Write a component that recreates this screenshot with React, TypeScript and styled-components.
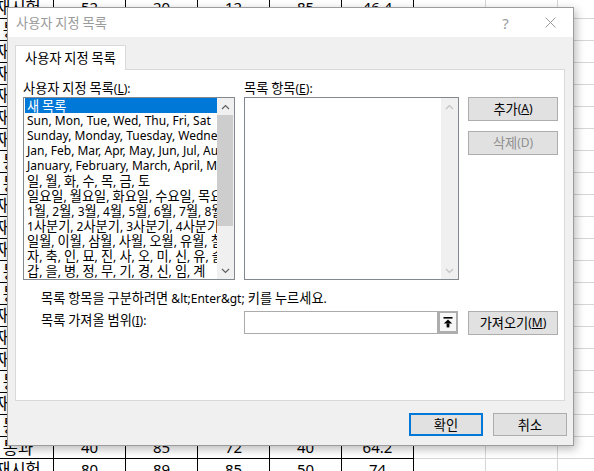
import React from "react";
import styled, { createGlobalStyle } from "styled-components";

const UI_FONT = `"Noto Sans", "Noto Sans CJK KR", sans-serif`;

const GlobalStyle = createGlobalStyle`
  html, body { margin: 0; padding: 0; background: #fff; }
  body { width: 594px; height: 471px; overflow: hidden; font-family: ${UI_FONT}; }
  #root { position: relative; width: 594px; height: 471px; overflow: hidden; }
`;

/* Hangul runs are set slightly larger so they get the width of the original UI font */
const Hangul = styled.span`
  font-family: "Noto Sans CJK KR", sans-serif;
  font-size: 1.1em;
`;

const HANGUL_RE = /([\u1100-\u11FF\u3130-\u318F\uAC00-\uD7AF]+(?: [\u1100-\u11FF\u3130-\u318F\uAC00-\uD7AF]+)*)/;

function K({ children }: { children: string }) {
  return (
    <>
      {children.split(HANGUL_RE).map((part, i) =>
        i % 2 === 1 ? <Hangul key={i}>{part}</Hangul> : part
      )}
    </>
  );
}

/* ---------- spreadsheet behind the dialog ---------- */

const Sheet = styled.div`
  display: grid;
  grid-template-columns: 71px repeat(8, 72px);
  grid-auto-rows: 22px;
  width: max-content;
  margin: -3px 0 0 -17px;
  font: 15px/21px ${UI_FONT};
  color: #000;
`;

const Cell = styled.div<{ $inTable: boolean }>`
  box-sizing: border-box;
  border-right: 1px solid ${(p) => (p.$inTable ? "#000" : "#d6d6d6")};
  border-bottom: 1px solid ${(p) => (p.$inTable ? "#000" : "#d6d6d6")};
  text-align: center;
  white-space: nowrap;
`;

const labels = [
  "재시험", "통과", "재시험", "재시험", "재시험", "재시험", "재시험", "통과",
  "통과", "재시험", "재시험", "재시험", "통과", "통과", "재시험", "재시험",
  "재시험", "통과", "재시험", "통과", "통과", "재시험",
];

const values: Record<number, string[]> = {
  0: ["52", "20", "12", "85", "46.4"],
  20: ["40", "85", "72", "40", "64.2"],
  21: ["80", "89", "85", "50", "74"],
};

/* ---------- dialog ---------- */

const Dialog = styled.div`
  position: absolute;
  left: 7px;
  top: 7px;
  width: 567px;
  height: 439px;
  box-sizing: border-box;
  border: 1px solid #9c9c9c;
  background: #f0f0f0;
  box-shadow: 2px 3px 9px rgba(0, 0, 0, 0.28);
  display: flex;
  flex-direction: column;
  font: 12px ${UI_FONT};
  color: #000;
`;

const TitleBar = styled.div`
  flex: none;
  height: 29px;
  background: #fff;
  display: flex;
  align-items: center;
  padding-left: 8px;
`;

const TitleText = styled.div`
  flex: 1;
  color: #9a9a9a;
  line-height: 16px;
  padding-top: 1px;
`;

const TitleButton = styled.div`
  width: 45px;
  height: 29px;
  display: flex;
  align-items: center;
  justify-content: center;
  color: #9a9a9a;
  font-size: 15px;
`;

const Body = styled.div`
  flex: 1;
  display: flex;
  flex-direction: column;
  padding: 8px 0 9px 7px;
`;

const TabStrip = styled.div`
  display: flex;
  margin: 0 8px -1px 0;
  position: relative;
  z-index: 1;
`;

const Tab = styled.div`
  height: 25px;
  box-sizing: border-box;
  padding: 0 9px;
  background: #fff;
  border: 1px solid #d9d9d9;
  border-bottom: none;
  line-height: 24px;
  white-space: nowrap;
`;

const Panel = styled.div`
  height: 332px;
  box-sizing: border-box;
  margin-right: 8px;
  padding: 9px 0 0 7px;
  background: #fff;
  border: 1px solid #d9d9d9;
`;

const TopSection = styled.div`
  display: flex;
  gap: 9px;
`;

const Column = styled.div<{ $w: number }>`
  width: ${(p) => p.$w}px;
  display: flex;
  flex-direction: column;
`;

const FieldLabel = styled.div`
  height: 18px;
  line-height: 18px;
  white-space: nowrap;
`;

const ListBox = styled.div`
  height: 183px;
  box-sizing: border-box;
  border: 1px solid #828790;
  background: #fff;
  display: flex;
`;

const Items = styled.div`
  flex: 1;
  min-width: 0;
  overflow: hidden;
  padding-left: 1px;
`;

const Item = styled.div<{ $selected?: boolean }>`
  height: 15px;
  line-height: 15px;
  padding-left: 2px;
  white-space: nowrap;
  overflow: hidden;
  background: ${(p) => (p.$selected ? "#0078d7" : "transparent")};
  color: ${(p) => (p.$selected ? "#fff" : "#000")};
`;

const ScrollBar = styled.div`
  width: 17px;
  flex: none;
  background: #f0f0f0;
  display: flex;
  flex-direction: column;
`;

const ScrollArrow = styled.div`
  height: 17px;
  flex: none;
  display: flex;
  align-items: center;
  justify-content: center;
`;

const Thumb = styled.div<{ $h: number }>`
  height: ${(p) => p.$h}px;
  flex: none;
  margin: 0 1px 0 0;
  background: #cdcdcd;
`;

const Track = styled.div`
  flex: 1;
`;

const ButtonColumn = styled.div`
  display: flex;
  flex-direction: column;
  gap: 10px;
  padding-top: 18px;
`;

const PushButton = styled.div<{ $w: number; $h: number; $primary?: boolean; $disabled?: boolean }>`
  width: ${(p) => p.$w}px;
  height: ${(p) => p.$h}px;
  box-sizing: border-box;
  background: #e1e1e1;
  border: ${(p) => (p.$primary ? "2px solid #0078d7" : "1px solid #adadad")};
  color: ${(p) => (p.$disabled ? "#8f8f8f" : "#000")};
  display: flex;
  align-items: center;
  justify-content: center;
  white-space: nowrap;
  line-height: 16px;
`;

const Hint = styled.div`
  margin-top: 10px;
  padding-left: 18px;
  line-height: 16px;
  white-space: nowrap;
`;

const RangeRow = styled.div`
  display: grid;
  grid-template-columns: 212px 215px 90px;
  column-gap: 9px;
  margin-top: 4px;
  align-items: start;
`;

const RangeLabel = styled.div`
  padding-left: 18px;
  line-height: 17px;
  white-space: nowrap;
`;

const RangeInput = styled.div`
  width: 214px;
  height: 23px;
  display: flex;
`;

const InputField = styled.div`
  flex: 1;
  box-sizing: border-box;
  border: 1px solid #ababab;
  border-right: none;
  background: #fff;
`;

const CollapseButton = styled.div`
  width: 21px;
  box-sizing: border-box;
  border: 2px solid #adadad;
  border-left-width: 3px;
  border-bottom-width: 3px;
  background: #f7f7f7;
  display: flex;
  align-items: center;
  justify-content: center;
`;

const Footer = styled.div`
  display: flex;
  justify-content: flex-end;
  gap: 10px;
  margin-top: 12px;
  padding-right: 6px;
`;

const Key = styled.u`
  text-underline-offset: 1px;
`;

const Chevron = ({ up, color }: { up: boolean; color: string }) => (
  <svg width="9" height="6" viewBox="0 0 9 6">
    <path
      d={up ? "M1 5 L4.5 1.5 L8 5" : "M1 1 L4.5 4.5 L8 1"}
      fill="none"
      stroke={color}
      strokeWidth="1.2"
    />
  </svg>
);

const listItems = [
  "새 목록",
  "Sun, Mon, Tue, Wed, Thu, Fri, Sat",
  "Sunday, Monday, Tuesday, Wednesday, Thursday, Friday, Saturday",
  "Jan, Feb, Mar, Apr, May, Jun, Jul, Aug, Sep, Oct, Nov, Dec",
  "January, February, March, April, May, June, July, August, September, October, November, December",
  "일, 월, 화, 수, 목, 금, 토",
  "일요일, 월요일, 화요일, 수요일, 목요일, 금요일, 토요일",
  "1월, 2월, 3월, 4월, 5월, 6월, 7월, 8월, 9월, 10월, 11월, 12월",
  "1사분기, 2사분기, 3사분기, 4사분기",
  "일월, 이월, 삼월, 사월, 오월, 유월, 칠월, 팔월, 구월, 시월, 동짓달, 섣달",
  "자, 축, 인, 묘, 진, 사, 오, 미, 신, 유, 술, 해",
  "갑, 을, 병, 정, 무, 기, 경, 신, 임, 계",
];

export default function App() {
  return (
    <>
      <GlobalStyle />
      <Sheet>
        {labels.map((label, r) =>
          Array.from({ length: 9 }).map((_, c) => (
            <Cell key={`${r}-${c}`} $inTable={c <= 5}>
              {c === 0 ? <K>{label}</K> : c <= 5 && values[r] ? values[r][c - 1] : ""}
            </Cell>
          ))
        )}
      </Sheet>

      <Dialog>
        <TitleBar>
          <TitleText>
            <K>사용자 지정 목록</K>
          </TitleText>
          <TitleButton>?</TitleButton>
          <TitleButton>
            <svg width="11" height="11" viewBox="0 0 11 11">
              <path d="M0.5 0.5 L10.5 10.5 M10.5 0.5 L0.5 10.5" stroke="#9a9a9a" strokeWidth="1" />
            </svg>
          </TitleButton>
        </TitleBar>

        <Body>
          <TabStrip>
            <Tab>
              <K>사용자 지정 목록</K>
            </Tab>
          </TabStrip>
          <Panel>
            <TopSection>
              <Column $w={212}>
                <FieldLabel>
                  <K>사용자 지정 목록</K>(<Key>L</Key>):
                </FieldLabel>
                <ListBox>
                  <Items>
                    {listItems.map((t, i) => (
                      <Item key={i} $selected={i === 0}>
                        <K>{t}</K>
                      </Item>
                    ))}
                  </Items>
                  <ScrollBar>
                    <ScrollArrow>
                      <Chevron up color="#606060" />
                    </ScrollArrow>
                    <Thumb $h={111} />
                    <Track />
                    <ScrollArrow>
                      <Chevron up={false} color="#606060" />
                    </ScrollArrow>
                  </ScrollBar>
                </ListBox>
              </Column>

              <Column $w={215}>
                <FieldLabel>
                  <K>목록 항목</K>(<Key>E</Key>):
                </FieldLabel>
                <ListBox>
                  <Items />
                  <ScrollBar>
                    <ScrollArrow>
                      <Chevron up color="#c2c2c2" />
                    </ScrollArrow>
                    <Track />
                    <ScrollArrow>
                      <Chevron up={false} color="#c2c2c2" />
                    </ScrollArrow>
                  </ScrollBar>
                </ListBox>
              </Column>

              <ButtonColumn>
                <PushButton $w={90} $h={24}>
                  <K>추가</K>(<Key>A</Key>)
                </PushButton>
                <PushButton $w={90} $h={24} $disabled>
                  <K>삭제</K>(D)
                </PushButton>
              </ButtonColumn>
            </TopSection>

            <Hint>
              <K>{"목록 항목을 구분하려면 &lt;Enter&gt; 키를 누르세요."}</K>
            </Hint>

            <RangeRow>
              <RangeLabel>
                <K>목록 가져올 범위</K>(<Key>I</Key>):
              </RangeLabel>
              <RangeInput>
                <InputField />
                <CollapseButton>
                  <svg width="10" height="11" viewBox="0 0 10 11">
                    <rect x="0.5" y="0" width="9" height="1.6" fill="#000" />
                    <path d="M5 2.4 L9.2 6.6 L0.8 6.6 Z" fill="#000" />
                    <rect x="3.6" y="6.4" width="2.8" height="4" fill="#000" />
                  </svg>
                </CollapseButton>
              </RangeInput>
              <PushButton $w={90} $h={24}>
                <K>가져오기</K>(<Key>M</Key>)
              </PushButton>
            </RangeRow>
          </Panel>

          <Footer>
            <PushButton $w={74} $h={23} $primary>
              <K>확인</K>
            </PushButton>
            <PushButton $w={74} $h={23}>
              <K>취소</K>
            </PushButton>
          </Footer>
        </Body>
      </Dialog>
    </>
  );
}
